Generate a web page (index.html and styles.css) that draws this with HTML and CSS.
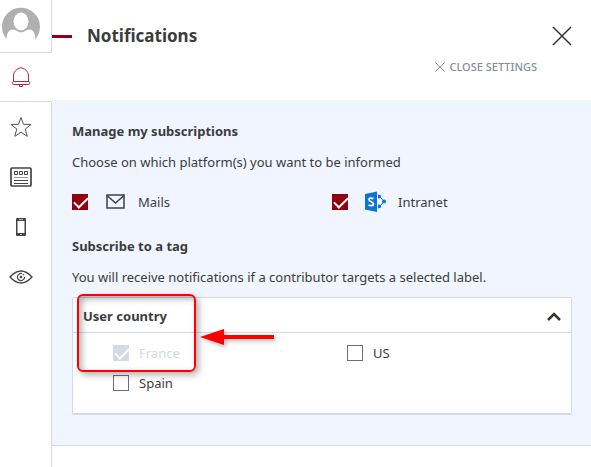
FILE: index.html
```html
<!DOCTYPE html>
<html lang="en">
<head>
    <meta charset="UTF-8">
    <meta name="viewport" content="width=device-width, initial-scale=1.0">
    <title>Notifications</title>
    <link rel="stylesheet" href="styles.css">
</head>
<body>

<div class="page">

    <!-- Side navigation -->
    <nav class="sidebar">
        <a href="#" class="nav-item profile" aria-label="Profile">
            <svg width="40" height="40" viewBox="0 0 40 40">
                <path d="M5.500 33 A19 19 0 1 1 34.500 33 C34 28 33 23.500 28 23.500 Q25 23.500 24 25 Q20 27.500 16 25 Q15 23.500 12 23.500 C7 23.500 6 28 5.500 33 Z" fill="#b0b0b0"/>
                <ellipse cx="20" cy="15.500" rx="7.500" ry="9" fill="#fff"/>
            </svg>
        </a>
        <a href="#" class="nav-item active" aria-label="Notifications">
            <svg width="20" height="22" viewBox="0 0 20 22" fill="none" stroke="#b5283a">
                <path d="M2.500 15.500 V9 C3 5 6 3 8 2.500 Q10 0.500 12 2.500 C14 3 17 5 17.500 9 V15.500"/>
                <rect x="1.500" y="15.500" width="17" height="3" rx="1"/>
                <path d="M8.500 18.500 V20.500 H11.500 V18.500"/>
            </svg>
        </a>
        <a href="#" class="nav-item" aria-label="Favorites">
            <svg width="22" height="22" viewBox="0 0 22 22" fill="none" stroke="#555">
                <path d="M11 1.500 L13.500 8.300 L21 8.500 L15.200 13 L17.200 20.300 L11 16.200 L4.800 20.300 L6.800 13 L1 8.500 L8.500 8.300 Z"/>
            </svg>
        </a>
        <a href="#" class="nav-item" aria-label="News">
            <svg width="22" height="20" viewBox="0 0 22 20" fill="none" stroke="#444">
                <rect x="1" y="1" width="20" height="18" rx="1" stroke-width="1.700"/>
                <path d="M4.500 4.500 h3 v3 h-3 Z M9.500 4.500 h3 v3 h-3 Z M14.500 4.500 h3 v3 h-3 Z M4 13.500 H18 M4 16.500 H18"/>
                <path d="M4 10.500 H18" stroke="#999"/>
            </svg>
        </a>
        <a href="#" class="nav-item" aria-label="Mobile">
            <svg width="10" height="18" viewBox="0 0 10 18">
                <rect width="10" height="18" rx="1" fill="#444"/>
                <rect x="1.500" y="3" width="7" height="12" fill="#fff"/>
                <path d="M3 1.500 H7 M4 16.500 H6" stroke="#bbb"/>
            </svg>
        </a>
        <a href="#" class="nav-item" aria-label="Visibility">
            <svg width="24" height="14" viewBox="0 0 24 14" fill="none" stroke="#444">
                <path d="M1 7 Q12 -5 23 7 Q12 19 1 7 Z" stroke-width="1.300"/>
                <path d="M13 3.500 A3.600 3.600 0 1 0 15.600 7" stroke-width="1.200"/>
                <circle cx="12" cy="7" r="1.300" fill="#444" stroke="none"/>
                <circle cx="14.500" cy="4.700" r="0.800" fill="#444" stroke="none"/>
            </svg>
        </a>
    </nav>

    <!-- Settings panel -->
    <main class="panel">
        <header class="panel-header">
            <div class="title-row">
                <span class="title-mark"></span>
                <h1>Notifications</h1>
                <button type="button" class="close-button" aria-label="Close">
                    <svg width="20" height="20" viewBox="0 0 20 20" stroke="#333" stroke-width="1.500">
                        <path d="M1 1 L19 19 M19 1 L1 19"/>
                    </svg>
                </button>
            </div>
            <button type="button" class="close-settings">
                <svg width="10" height="10" viewBox="0 0 10 10" stroke="#868d9c">
                    <path d="M0.500 0.500 L9.500 9.500 M9.500 0.500 L0.500 9.500"/>
                </svg>
                CLOSE SETTINGS
            </button>
        </header>

        <section class="settings">
            <h2>Manage my subscriptions</h2>
            <p>Choose on which platform(s) you want to be informed</p>
            <div class="platforms">
                <label class="option">
                    <input type="checkbox" checked>
                    <svg class="platform-icon" width="22" height="22" viewBox="0 0 22 22" fill="none" stroke="#3c4048" stroke-width="1.500">
                        <rect x="3" y="4" width="17" height="13"/>
                        <path d="M3 4.500 L11.500 12 L20 4.500"/>
                    </svg>
                    Mails
                </label>
                <label class="option">
                    <input type="checkbox" checked>
                    <svg class="platform-icon" width="22" height="22" viewBox="0 0 22 22" fill="none" stroke="#0b74d4">
                        <path d="M1 3 L13 0.500 V21 L1 18.500 Z" fill="#0b74d4" stroke="none"/>
                        <path d="M9.500 7.700 Q5 6 5 8.700 C5 11 9.500 10.500 9.500 13 Q9 15.700 4.500 14" stroke="#fff" stroke-width="1.800"/>
                        <path d="M15.500 5.500 L20 10.500 L15.500 15.500"/>
                        <path d="M14 3.500 L17 4.500 L17 7 L14 7.500 Z M14 13.500 L17 14 L17 16.500 L14 17.500 Z" fill="#0b74d4" stroke="none"/>
                        <circle cx="20" cy="10.500" r="2" fill="#0b74d4" stroke="none"/>
                    </svg>
                    Intranet
                </label>
            </div>

            <h2>Subscribe to a tag</h2>
            <p>You will receive notifications if a contributor targets a selected label.</p>
            <div class="tag-box">
                <div class="tag-header">
                    <h3>User country</h3>
                    <button type="button" class="toggle" aria-label="Collapse">
                        <svg width="14" height="9" viewBox="0 0 14 9" fill="none" stroke="#3a3430" stroke-width="2.500">
                            <path d="M1 8 L7 2 L13 8"/>
                        </svg>
                    </button>
                </div>
                <div class="tag-list">
                    <label class="option disabled"><input type="checkbox" checked disabled>France</label>
                    <label class="option"><input type="checkbox">US</label>
                    <label class="option"><input type="checkbox">Spain</label>
                </div>

                <!-- Red frame and arrow over the locked tag -->
                <div class="highlight"></div>
                <svg class="arrow" width="74" height="16" viewBox="0 0 74 16" fill="#f00">
                    <path d="M0 8 L24 0 V6 H74 V10 H24 V16 Z"/>
                </svg>
            </div>
        </section>
    </main>

</div>

</body>
</html>
```
FILE: styles.css
```css
* {
    box-sizing: border-box;
}

body {
    margin: 0;
    background: #fff;
    color: #3c3c3c;
    font-family: 'Noto Sans', 'Open Sans', sans-serif;
    font-size: 13px;
    line-height: 22px;
}

h1, h2, h3, p {
    margin: 0;
}

h2, h3 {
    font-size: 13px;
    font-weight: 700;
}

button {
    padding: 0;
    border: none;
    background: none;
    font-family: inherit;
    cursor: pointer;
}

svg {
    display: block;
    flex: none;
}

.page {
    display: flex;
    min-height: 100vh;
}

/* Side navigation */
.sidebar {
    display: flex;
    flex-direction: column;
    flex: none;
    width: 52px;
}

.sidebar::after {
    content: '';
    flex: 1;
    border-right: 1px solid #d2d9e8;
}

.nav-item {
    display: flex;
    align-items: center;
    justify-content: center;
    height: 50px;
    padding-right: 9px;
    border-right: 1px solid #d2d9e8;
}

.profile {
    height: 53px;
    border-bottom: 1px solid #d2d9e8;
}

.active {
    height: 49px;
    border-right-color: transparent;
    border-bottom: 1px solid #d2d9e8;
}

/* Header */
.panel {
    flex: 1;
}

.panel-header {
    height: 100px;
    padding: 20px 19px 0 0;
}

.title-row {
    display: flex;
    align-items: center;
    height: 32px;
}

.title-mark {
    width: 20px;
    height: 3px;
    margin-right: 15px;
    background: #92000f;
}

h1 {
    font-size: 17px;
    font-weight: 700;
}

.close-button {
    margin-left: auto;
}

.close-settings {
    display: flex;
    align-items: center;
    gap: 4px;
    margin: 4px 35px 0 auto;
    color: #868d9c;
    font-size: 11px;
    font-weight: 500;
    line-height: 22px;
}

/* Settings */
.settings {
    padding: 20px 19px 30px 20px;
    border-bottom: 1px solid #d2d9e8;
    background: #f0f5ff;
}

.settings p {
    margin: 9px 0;
}

.platforms {
    display: grid;
    grid-template-columns: 1fr 1fr;
    gap: 20px;
    margin: 18px 0 22px;
}

.option {
    display: flex;
    align-items: center;
}

.platform-icon {
    margin: 0 12px 0 16px;
}

input[type="checkbox"] {
    appearance: none;
    display: block;
    flex: none;
    width: 16px;
    height: 16px;
    margin: 0;
    border: 1px solid #697080;
    background: #fff;
}

input[type="checkbox"]:checked {
    border-color: #92000f;
    background: #92000f;
}

input[type="checkbox"]:checked::after {
    content: '';
    display: block;
    width: 12px;
    height: 6px;
    margin: 2px 0 0 1px;
    border: solid #fff;
    border-width: 0 0 2px 2px;
    transform: rotate(-45deg);
}

input[type="checkbox"]:checked:disabled {
    border-color: #d2d9e8;
    background: #d2d9e8;
}

.disabled {
    color: #d2d9e8;
}

/* Tag box */
.tag-box {
    position: relative;
    border: 1px solid #d2d9e8;
    border-bottom-width: 2px;
    border-radius: 2px;
    background: #fff;
}

.tag-header {
    display: flex;
    align-items: center;
    justify-content: space-between;
    height: 35px;
    padding: 2px 10px 0;
    border-bottom: 1px solid #d2d9e8;
}

.tag-list {
    display: grid;
    grid-template-columns: 1fr 1fr;
    gap: 8px 10px;
    padding: 9px 0 19px 40px;
}

.tag-list input {
    margin-right: 10px;
}

.highlight {
    position: absolute;
    top: -4px;
    left: 4px;
    width: 119px;
    height: 78px;
    border: 2px solid #f00;
    border-radius: 6px;
    box-shadow: 3px 3px 6px rgba(0, 0, 0, 0.3), inset 3px 3px 6px rgba(0, 0, 0, 0.3);
    pointer-events: none;
}

.arrow {
    position: absolute;
    top: 31px;
    left: 127px;
    filter: drop-shadow(2px 2px 2px rgba(0, 0, 0, 0.3));
}
```
